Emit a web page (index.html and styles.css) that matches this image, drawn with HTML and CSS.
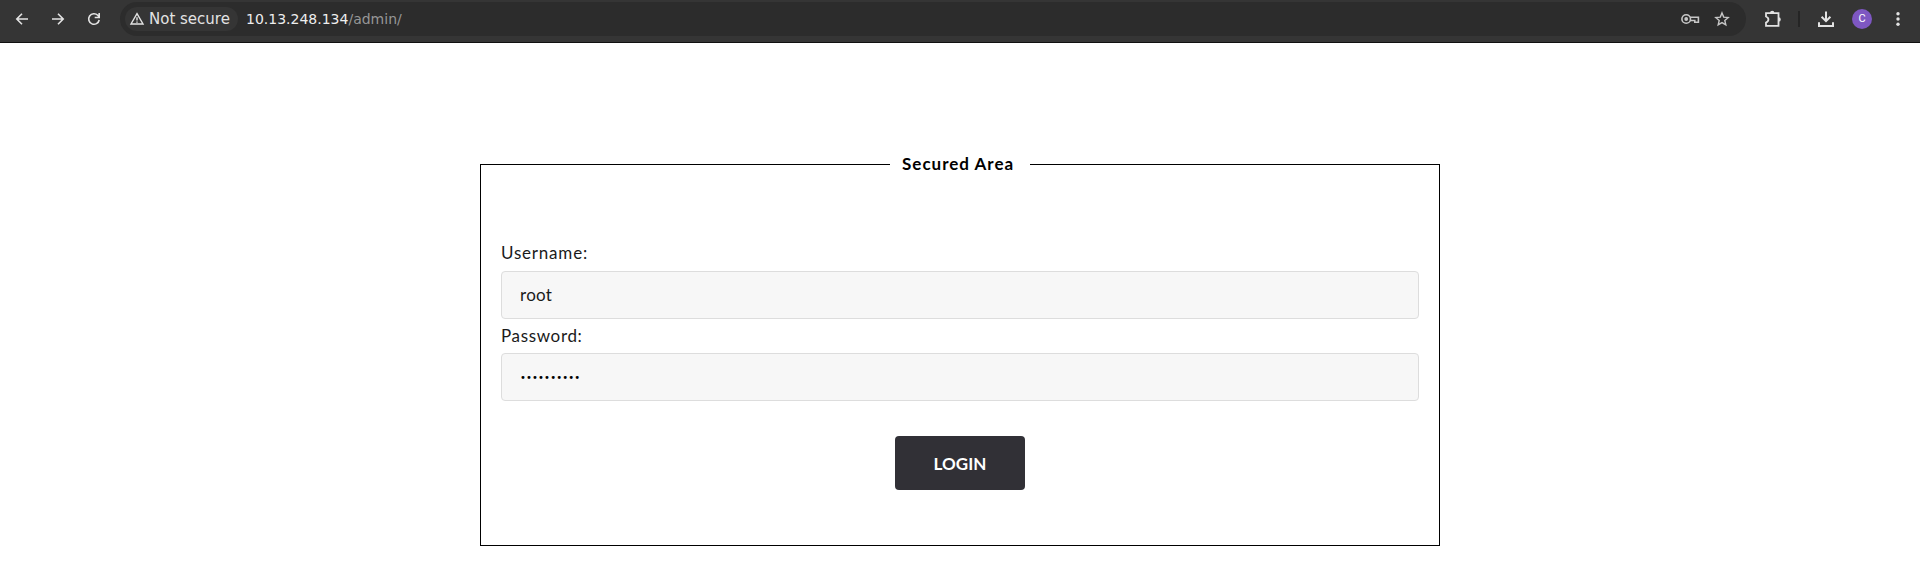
FILE: index.html
```html
<!DOCTYPE html>
<html lang="en">
<head>
<meta charset="utf-8">
<title>Secured Area</title>
<link rel="stylesheet" href="styles.css">
</head>
<body>
<header class="toolbar">
  <nav class="nav">
    <svg class="icon" viewBox="0 0 16 16"><path d="M14 8H3M8 2.8L2.8 8L8 13.2"/></svg>
    <svg class="icon" viewBox="0 0 16 16"><path d="M2 8h11M8 2.8L13.2 8L8 13.2"/></svg>
    <svg class="icon" viewBox="0 0 16 16"><path d="M13.2 9A5.3 5.3 0 1 1 11.8 4.3L13 5.6M13.2 2v4.5H8.7"/></svg>
  </nav>
  <div class="omnibox">
    <div class="chip">
      <svg class="warn" viewBox="0 0 16 16"><path d="M8 2.6L14 13H2Z"/><path d="M8 6.2v3.2M8 10.4v1.4"/></svg>
      <span>Not secure</span>
    </div>
    <div class="url">10.13.248.134<span class="path">/admin/</span></div>
    <svg class="key" viewBox="0 0 20 16"><circle cx="6.2" cy="8" r="4.3"/><circle class="dot" cx="6.2" cy="8" r="1.9"/><path d="M10 6.2h8.4v5h-3.6V9.5H10"/></svg>
    <svg class="star" viewBox="0 0 16 16"><path d="M8 1.9l1.7 4.2 4.5.4-3.4 3 1 4.4L8 11.6l-3.8 2.3 1-4.4-3.4-3 4.5-.4Z"/></svg>
  </div>
  <div class="actions">
    <svg class="puzzle" viewBox="0 0 18 18"><path d="M2 3.2h12.5v12.6H2v-3.3q2.4-.9 2.4-3T2 6.5Z"/><path class="solid" d="M6 3a2.2 2.2 0 0 1 4.4 0M14.6 7.2a2.2 2.2 0 0 1 0 4.4"/></svg>
    <span class="divider"></span>
    <svg class="download" viewBox="0 0 18 18"><path d="M9 1.5v9.3M4.6 6.8L9 11.2l4.4-4.4M2 12.3v3.8h14v-3.8"/></svg>
    <span class="avatar">C</span>
    <svg class="menu" viewBox="0 0 4 16"><circle cx="2" cy="2.8" r="1.7"/><circle cx="2" cy="8" r="1.7"/><circle cx="2" cy="13.2" r="1.7"/></svg>
  </div>
</header>
<main class="page">
  <form class="panel">
    <div class="legend"><span class="legend-text">Secured Area</span></div>
    <div class="label user">Username:</div>
    <div class="field"><span class="value">root</span></div>
    <div class="label pass">Password:</div>
    <div class="field"><span class="bullets">••••••••••</span></div>
    <button class="login" type="button">LOGIN</button>
  </form>
</main>
</body>
</html>
```
FILE: styles.css
```css
* { box-sizing: border-box; }
body { margin: 0; height: 574px; overflow: hidden; background: #fff; color: #1a1a1a; font-family: Lato, sans-serif; }
svg { display: block; flex: none; fill: none; stroke: #e3e3e3; stroke-width: 1.6; }

.toolbar { display: flex; height: 43px; padding: 2px 0 6px; background: #353535; border-bottom: 1px solid #101010; font-family: "DejaVu Sans", sans-serif; }
.nav { display: flex; align-items: center; gap: 20px; width: 120px; padding-left: 14px; }
.icon { width: 16px; height: 16px; }
.omnibox { display: flex; align-items: center; width: 1626px; height: 34px; padding: 0 16px 0 5px; border-radius: 17px; background: #2c2c2c; }
.chip { display: flex; align-items: center; width: 113px; height: 24px; padding-left: 4px; border-radius: 12px; background: #353535; color: #e3e3e3; font-size: 15px; line-height: 24px; white-space: nowrap; }
.warn { width: 16px; height: 16px; margin-right: 4px; stroke-width: 1.4; }
.url { flex: 1; margin-left: 8px; color: #eee; font-size: 14px; }
.path { color: #969696; }
.key { width: 20px; height: 16px; margin-right: 14px; stroke: #c7c7c7; }
.dot { fill: #c7c7c7; stroke: none; }
.star { width: 16px; height: 16px; stroke: #c7c7c7; stroke-width: 1.4; }
.actions { display: flex; align-items: center; padding-left: 18px; }
.puzzle { width: 18px; height: 18px; stroke-width: 1.8; }
.solid { fill: #e3e3e3; stroke: none; }
.divider { width: 2px; height: 16px; margin: 0 17px 0 16px; background: #252525; }
.download { width: 18px; height: 18px; stroke-width: 2; }
.avatar { width: 20px; height: 20px; margin: 0 24px 0 17px; border-radius: 50%; background: #7e57c2; color: #fff; font: 11px/20px Roboto, sans-serif; text-align: center; }
.menu { width: 4px; height: 16px; fill: #e3e3e3; stroke: none; }

.page { padding-top: 121px; }
.panel { display: flex; flex-direction: column; width: 960px; height: 382px; margin: 0 auto; padding: 0 20px; border: 1px solid #000; }
.legend { width: 140px; height: 24px; margin: -13px auto 0; padding-left: 12px; background: #fff; color: #000; font-size: 17px; font-weight: 700; line-height: 24px; white-space: nowrap; }
.legend-text { letter-spacing: 1px; }
.label { height: 24px; font-size: 17px; line-height: 24px; white-space: nowrap; }
.user { margin: 65px 0 6px; letter-spacing: 0.8px; }
.pass { margin: 5px 0; letter-spacing: 0.65px; }
.field { display: flex; align-items: center; height: 48px; padding: 0 17px 0 18px; border: 1px solid #ddd; border-radius: 4px; background: #f7f7f7; }
.value { font-size: 17px; line-height: 24px; letter-spacing: 0.3px; }
.bullets { color: #000; font-family: "DejaVu Sans", sans-serif; font-size: 10px; letter-spacing: 0.13px; }
.login { align-self: center; width: 130px; height: 54px; margin-top: 35px; padding: 2px 0 0; border: 0; border-radius: 4px; background: #313036; color: #fff; font: 700 17px/52px Lato, sans-serif; letter-spacing: 0.1px; }
```
